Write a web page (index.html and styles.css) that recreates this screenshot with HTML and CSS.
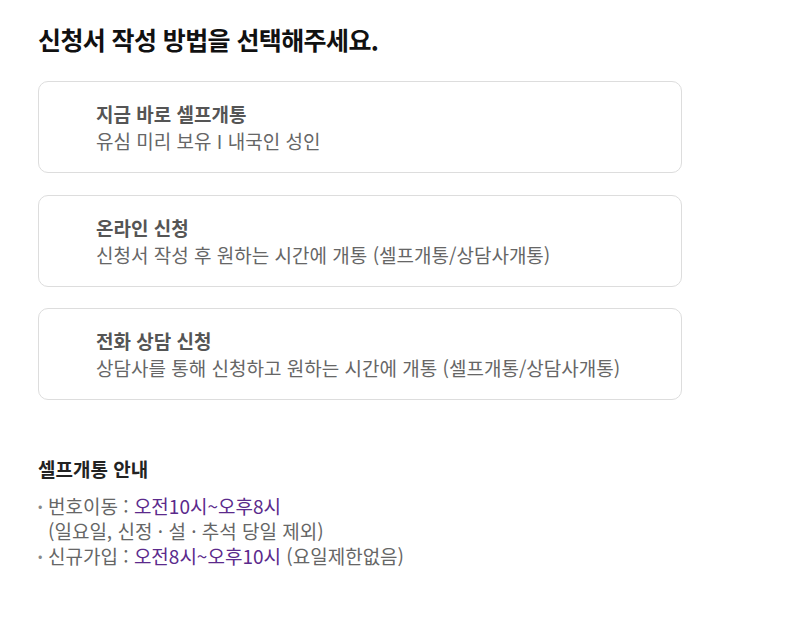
FILE: index.html
```html
<!DOCTYPE html>
<html lang="ko">
<head>
  <meta charset="UTF-8">
  <meta name="viewport" content="width=device-width, initial-scale=1.0">
  <title>신청서 작성 방법 선택</title>
  <link rel="stylesheet" href="styles.css">
</head>
<body>

<div class="container">
  <h2 class="page-title">신청서 작성 방법을 선택해주세요.</h2>

  <ul class="option-list">
    <li class="option-card">
      <strong class="option-title">지금 바로 셀프개통</strong>
      <span class="option-desc">유심 미리 보유 I 내국인 성인</span>
    </li>
    <li class="option-card">
      <strong class="option-title">온라인 신청</strong>
      <span class="option-desc">신청서 작성 후 원하는 시간에 개통 (셀프개통/상담사개통)</span>
    </li>
    <li class="option-card">
      <strong class="option-title">전화 상담 신청</strong>
      <span class="option-desc">상담사를 통해 신청하고 원하는 시간에 개통 (셀프개통/상담사개통)</span>
    </li>
  </ul>

  <div class="notice">
    <h3 class="notice-title">셀프개통 안내</h3>
    <ul class="notice-list">
      <li>번호이동 : <span class="point">오전10시~오후8시</span><br>(일요일, 신정 · 설 · 추석 당일 제외)</li>
      <li>신규가입 : <span class="point">오전8시~오후10시</span> (요일제한없음)</li>
    </ul>
  </div>
</div>

</body>
</html>
```

FILE: styles.css
```css
body {
  font-family: 'Noto Sans CJK KR', 'Noto Sans', sans-serif;
  margin: 0;
  padding: 0;
  background-color: #fff;
  color: #222;
}
.container {
  width: 644px;
  padding: 20px 38px;
}
.page-title {
  margin: 0 0 23px;
  font-size: 25px;
  font-weight: 700;
  line-height: 38px;
  letter-spacing: -0.6px;
  color: #111;
}
.option-list {
  list-style: none;
  margin: 0;
  padding: 0;
  display: flex;
  flex-direction: column;
  gap: 21.5px;
}
.option-card {
  display: flex;
  flex-direction: column;
  padding: 18px 20px 18px 57px;
  border: 1px solid #ddd;
  border-radius: 10px;
  font-size: 19px;
  line-height: 27px;
  letter-spacing: 0;
}
.option-title {
  font-weight: 700;
  color: #555;
}
.option-desc {
  color: #666;
}
.notice {
  margin-top: 56px;
}
.notice-title {
  margin: 0 0 11px;
  font-size: 19px;
  font-weight: 700;
  line-height: 26px;
  color: #222;
}
.notice-list {
  list-style: none;
  margin: 0;
  padding: 0;
  font-size: 19px;
  line-height: 25px;
  color: #666;
}
.notice-list li {
  position: relative;
  padding-left: 10px;
}
.notice-list li::before {
  content: "•";
  position: absolute;
  left: 0;
  color: #888;
  font-size: 13px;
}
.point {
  color: #5b2a8c;
}
```
